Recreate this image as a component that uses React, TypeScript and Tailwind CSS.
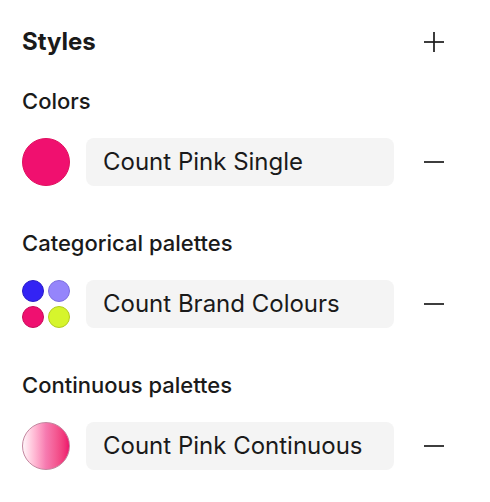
import React from "react";

const font = { fontFamily: "Inter, 'Noto Sans', sans-serif" };

function Minus() {
  return (
    <svg width="22" height="22" viewBox="0 0 22 22" className="shrink-0">
      <line x1="1" y1="11" x2="21" y2="11" stroke="#1a1a1a" strokeWidth="1.7" />
    </svg>
  );
}

function Row({ swatch, name }: { swatch: React.ReactNode; name: string }) {
  return (
    <div className="flex items-center h-[48px]">
      <div className="w-[48px] h-[48px] shrink-0">{swatch}</div>
      <div className="ml-[16px] w-[308px] h-[48px] rounded-[8px] bg-[#f4f4f4] flex items-center pl-[17px] text-[24px] text-[#1a1a1a]">
        {name}
      </div>
      <div className="ml-[29px] flex items-center">
        <Minus />
      </div>
    </div>
  );
}

function Label({ children }: { children: React.ReactNode }) {
  return <div className="mt-[43px] text-[22px] font-medium text-[#1a1a1a] leading-[28px]">{children}</div>;
}

export default function App() {
  return (
    <div className="w-[490px] h-[502px] bg-white px-[22px] pt-[28px]" style={font}>
      <div className="flex items-center justify-between h-[28px] w-[423px]">
        <div className="text-[24px] font-bold text-[#1a1a1a] leading-none">Styles</div>
        <svg width="22" height="22" viewBox="0 0 22 22">
          <line x1="1" y1="11" x2="21" y2="11" stroke="#1a1a1a" strokeWidth="1.7" />
          <line x1="11" y1="1" x2="11" y2="21" stroke="#1a1a1a" strokeWidth="1.7" />
        </svg>
      </div>
      <div className="mt-[31px] text-[22px] font-medium text-[#1a1a1a] leading-[28px]">Colors</div>
      <div className="mt-[23px]">
        <Row
          name="Count Pink Single"
          swatch={<div className="w-[48px] h-[48px] rounded-full bg-[#f0106f] border border-[#e0105f]" />}
        />
      </div>
      <Label>Categorical palettes</Label>
      <div className="mt-[23px]">
        <Row
          name="Count Brand Colours"
          swatch={
            <div className="grid grid-cols-2 gap-[4px] w-[48px] h-[48px]">
              <div className="w-[22px] h-[22px] rounded-full bg-[#3323f4] border border-[#2a1dc8]" />
              <div className="w-[22px] h-[22px] rounded-full bg-[#9585fb] border border-[#7d6ee0]" />
              <div className="w-[22px] h-[22px] rounded-full bg-[#ef1070] border border-[#c80d5c]" />
              <div className="w-[22px] h-[22px] rounded-full bg-[#d6f52c] border border-[#b3cc20]" />
            </div>
          }
        />
      </div>
      <Label>Continuous palettes</Label>
      <div className="mt-[23px]">
        <Row
          name="Count Pink Continuous"
          swatch={
            <div className="w-[48px] h-[48px] rounded-full border-[1.5px] border-[#c3869f] bg-gradient-to-r from-[#fff5f9] via-[#f67ab0] to-[#ee0f6c]" />
          }
        />
      </div>
    </div>
  );
}
